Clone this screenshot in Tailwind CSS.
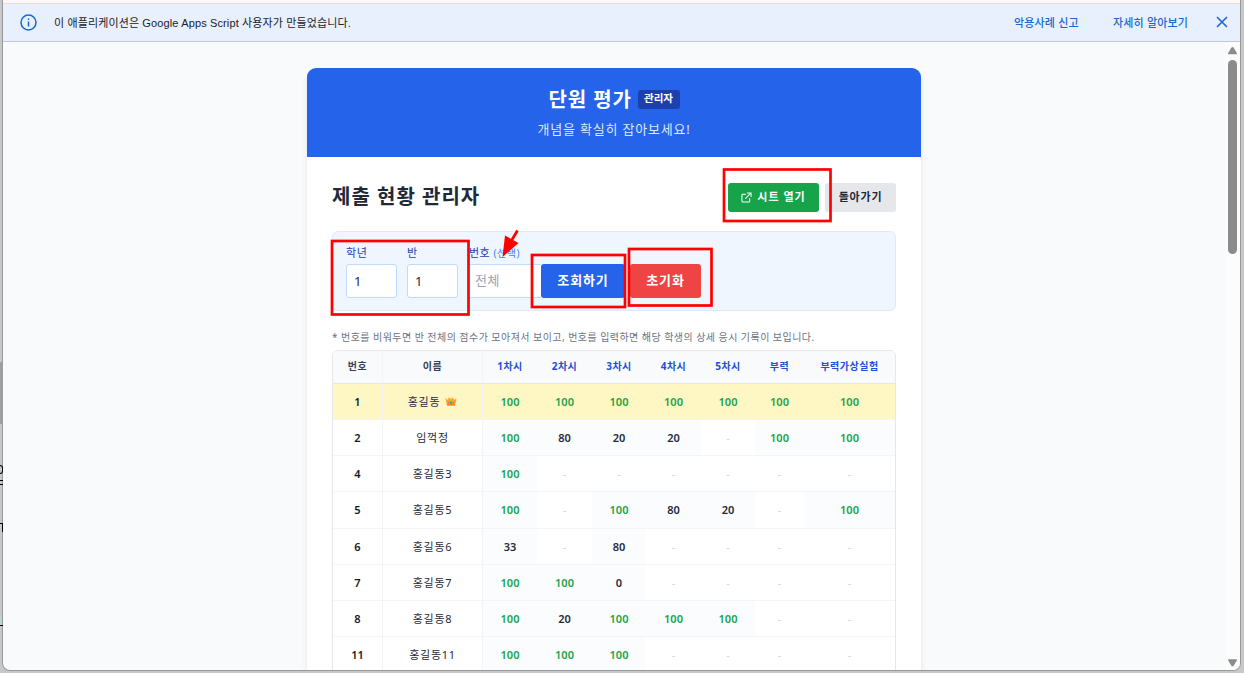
<!DOCTYPE html>
<html lang="ko">
<head>
<meta charset="utf-8">
<title>단원 평가</title>
<script src="https://cdn.jsdelivr.net/npm/@tailwindcss/browser@4"></script>
</head>
<body class="relative h-[673px] w-[1244px] overflow-hidden bg-[#c8c8c8] pr-[3px] pl-[2px] font-['Noto_Sans','Noto_Sans_CJK_KR',sans-serif]">
<div class="absolute top-[362px] left-0 h-[62px] w-[3px] bg-[#9f9f9f]"></div>
<div class="absolute top-[465px] left-0 h-[9px] w-[3px] rounded-r-full border-y border-r border-black"></div>
<div class="absolute top-[480px] left-0 h-[5px] w-[3px] border-y border-black"></div>
<div class="absolute top-[523px] left-0 h-[9px] w-[3px] border-t border-r border-black"></div>
<div class="absolute top-[625px] left-0 h-px w-[3px] bg-black"></div>
<div class="absolute top-[616px] left-0 h-[9px] w-[2px] bg-[#b9d3d0]"></div>

<div class="flex h-[671px] flex-col overflow-hidden rounded-b-[8px] border-x border-b border-[#999] bg-[#f9fafb]">
  <div class="h-[4px] shrink-0 border-b border-[#f3d9d3] bg-[#fdf8f6]"></div>
  <header class="flex h-[38px] shrink-0 items-center border-b border-[#c4c7cc] bg-[#e8f0fe] pr-[12px] pl-[17px] font-['Liberation_Sans','Noto_Sans_CJK_KR',sans-serif] text-[11px] whitespace-nowrap">
    <svg class="h-[17px] w-[17px] shrink-0" viewBox="0 0 17 17" fill="none" stroke="#1967d2" stroke-width="1.5"><circle cx="8.5" cy="8.5" r="7.5"/><path d="M8.5 7.5v5M8.5 4.4v1.6"/></svg>
    <span class="mt-[2px] ml-[17px] inline-block w-[297px] tracking-[0.13px] text-[#202124]">이 애플리케이션은 Google Apps Script 사용자가 만들었습니다.</span>
    <span class="mt-[2px] ml-auto w-[65px] tracking-[0.15px] font-medium text-[#1967d2]">악용사례 신고</span>
    <span class="mt-[2px] ml-[34px] w-[75px] tracking-[0.15px] font-medium text-[#1967d2]">자세히 알아보기</span>
    <svg class="mt-[-2px] ml-[28px] h-[12px] w-[12px] shrink-0" viewBox="0 0 12 12" fill="none" stroke="#1967d2" stroke-width="1.6"><path d="M1 1l10 10M11 1L1 11"/></svg>
  </header>

  <div class="flex min-h-0 flex-1">
    <main class="flex h-full flex-1 justify-center overflow-hidden pt-[26px] pr-[1px]">
      <div class="h-[660px] w-[614px] shrink-0 overflow-hidden rounded-t-[9px] bg-white shadow-md">
        <div class="flex h-[89px] flex-col items-center bg-[#2563eb] pt-[17px] text-white">
          <div class="flex h-[28px] items-center gap-[6px]">
            <h1 class="mt-[2px] w-[83px] text-[20px] leading-[28px] font-bold tracking-[0.9px] whitespace-nowrap">단원 평가</h1>
            <span class="flex h-[19px] w-[42px] items-center justify-center rounded-[3px] bg-[#1e40af] text-[10.5px] font-bold whitespace-nowrap">관리자</span>
          </div>
          <p class="mt-[6px] text-[13px] leading-[20px] tracking-[0.8px] whitespace-nowrap text-[#dbeafe]">개념을 확실히 잡아보세요!</p>
        </div>

        <div class="px-[25px] pt-[26px]">
          <div class="flex h-[29px] items-center">
            <h2 class="mt-[-2px] mr-auto text-[20px] font-bold tracking-[1px] whitespace-nowrap text-[#1f2937]">제출 현황 관리자</h2>
            <button class="flex h-[29px] w-[91px] items-center justify-center gap-[5px] rounded-[3px] bg-[#16a34a] text-[11px] font-bold tracking-[1px] whitespace-nowrap text-white">
              <svg class="h-[11px] w-[11px]" viewBox="0 0 24 24" fill="none" stroke="currentColor" stroke-width="2.2" stroke-linecap="round" stroke-linejoin="round"><path d="M10 5H4a2 2 0 0 0-2 2v13a2 2 0 0 0 2 2h13a2 2 0 0 0 2-2v-6M14 2h8v8M22 2L10 14"/></svg>
              시트 열기
            </button>
            <button class="ml-[6px] h-[29px] w-[71px] rounded-[3px] bg-[#e5e7eb] text-[11px] font-bold tracking-[0.8px] whitespace-nowrap text-[#1f2937]">돌아가기</button>
          </div>

          <div class="mt-[19px] flex h-[80px] rounded-[6px] border border-[#dbeafe] bg-[#eff6ff] pt-[13px] pl-[13px] whitespace-nowrap">
            <div class="w-[61px]">
              <div class="h-[19px] text-[11px] leading-[16px] tracking-[0.7px] text-[#1e40af]">학년</div>
              <div class="flex h-[34px] w-[51px] items-center rounded-[3px] border border-[#bfdbfe] bg-white pt-[2px] pl-[7px] text-[13px] text-[#1f2937]">1</div>
            </div>
            <div class="w-[61px]">
              <div class="h-[19px] text-[11px] leading-[16px] text-[#1e40af]">반</div>
              <div class="flex h-[34px] w-[51px] items-center rounded-[3px] border border-[#bfdbfe] bg-white pt-[2px] pl-[7px] text-[13px] text-[#1f2937]">1</div>
            </div>
            <div class="w-[73px]">
              <div class="h-[19px] pl-[1px] text-[11px] leading-[16px] tracking-[0.5px] text-[#1e40af]">번호 <span class="text-[10px] text-[#3b82f6]">(선택)</span></div>
              <div class="flex h-[34px] w-[73px] items-center rounded-l-[3px] border border-r-0 border-[#bfdbfe] bg-white pl-[6px] text-[13px] tracking-[0.5px] text-[#9ca3af]">전체</div>
            </div>
            <button class="mt-[19px] h-[34px] w-[84px] rounded-[3px] bg-[#2563eb] text-[13px] font-bold tracking-[0.9px] text-white">조회하기</button>
            <button class="mt-[19px] ml-[5px] h-[34px] w-[71px] rounded-[3px] bg-[#ef4444] text-[13px] font-bold tracking-[0.9px] text-white">초기화</button>
          </div>

          <p class="mt-[17px] h-[22px] text-[10px] leading-[18px] tracking-[0.45px] whitespace-nowrap text-[#6b7280]">* 번호를 비워두면 반 전체의 점수가 모아져서 보이고, 번호를 입력하면 해당 학생의 상세 응시 기록이 보입니다.</p>

          <div class="h-[400px] w-[564px] overflow-hidden rounded-t-[6px] border border-[#e5e7eb]">
            <div class="grid h-[33px] grid-cols-[50px_100px_54px_55px_54px_55px_54px_49px_91px] border-b border-[#e5e7eb] bg-[#f9fafb] text-center text-[10px] leading-[31px] font-bold tracking-[0.5px] whitespace-nowrap text-[#1d4ed8]">
              <div class="border-r border-[#f3f4f6] text-[#374151]">번호</div><div class="border-r border-[#f3f4f6] text-[#374151]">이름</div><div>1차시</div><div>2차시</div><div>3차시</div><div>4차시</div><div>5차시</div><div>부력</div><div>부력가상실험</div>
            </div>
            <div id="rows" class="mt-[-0.2px]"></div>
          </div>
        </div>
      </div>
    </main>
    <div class="flex w-[14px] shrink-0 flex-col items-center bg-[#fcfcfc] pt-[5px] pr-[1px] pb-[3px]">
      <svg class="h-[8px] w-[9px] shrink-0" viewBox="0 0 9 8" fill="#8b8b8b"><path d="M4.5 0Q5.2 0 5.6.6L8.8 6Q9.3 7.2 8.2 7.2H.8Q-.3 7.2.2 6L3.4.6Q3.8 0 4.5 0z"/></svg>
      <div class="mt-[5px] h-[194px] w-[9px] shrink-0 rounded-full bg-[#8b8b8b]"></div>
      <svg class="mt-auto h-[8px] w-[9px] shrink-0" viewBox="0 0 9 8" fill="#8b8b8b"><path d="M4.5 7.4Q5.2 7.4 5.6 6.8L8.8 1.4Q9.3.2 8.2.2H.8Q-.3.2.2 1.4L3.4 6.8Q3.8 7.4 4.5 7.4z"/></svg>
    </div>
  </div>
</div>

<svg class="absolute top-0 left-0 h-[673px] w-[1244px]" viewBox="0 0 1244 673" fill="none" stroke="#ff0000" stroke-width="2.7">
  <rect x="724" y="169.500" width="106.500" height="51.500"/>
  <rect x="332" y="241" width="136.500" height="73.500"/>
  <rect x="532" y="255" width="93" height="52"/>
  <rect x="629" y="249" width="82.500" height="56.500"/>
  <path d="M517.500 230.500L510 243"/>
  <path d="M505 235.500L518.500 243L502.500 257Z" fill="#ff0000" stroke="none"/>
</svg>

<script>
const data = [
  [1, '홍길동', 100, 100, 100, 100, 100, 100, 100],
  [2, '임꺽정', 100, 80, 20, 20, '-', 100, 100],
  [4, '홍길동3', 100, '-', '-', '-', '-', '-', '-'],
  [5, '홍길동5', 100, '-', 100, 80, 20, '-', 100],
  [6, '홍길동6', 33, '-', 80, '-', '-', '-', '-'],
  [7, '홍길동7', 100, 100, 0, '-', '-', '-', '-'],
  [8, '홍길동8', 100, 20, 100, 100, 100, '-', '-'],
  [11, '홍길동11', 100, 100, 100, '-', '-', '-', '-'],
];
const crown = '<svg class="ml-[5px] h-[10px] w-[12px]" viewBox="0 0 12 10"><path d="M.5 2l2.300 2L4 1l1.300 2.500L6 .4l.7 3.100L8 1l1.200 3 2.300-2-1.300 7.500H1.800z" fill="#f9a825"/><path d="M2 8h8v1.500H2z" fill="#f58b1e"/><circle cx="6" cy="6.800" r="1.200" fill="#29a3c7"/><circle cx="3.500" cy="6.800" r=".7" fill="#e8583d"/><circle cx="8.500" cy="6.800" r=".7" fill="#e8583d"/></svg>';
document.getElementById('rows').innerHTML = data.map((r, i) => {
  const top = i === 0;
  const cells = r.slice(2).map(v => {
    const bg = top || v === '-' ? '' : 'bg-[#fbfcfe]';
    const fg = v === '-' ? 'text-[#d1d5db] font-normal' : v === 100 ? 'text-[#16a34a] font-semibold' : 'text-[#1f2937] font-semibold';
    return `<div class="${bg} ${fg}">${v}</div>`;
  }).join('');
  return `<div class="grid h-[36.2px] grid-cols-[50px_100px_54px_55px_54px_55px_54px_49px_91px] border-b border-[#f3f4f6] text-center text-[11px] leading-[35.2px] whitespace-nowrap ${top ? 'bg-[#fef7c3]' : 'bg-white'}"><div class="border-r border-[#f3f4f6] font-semibold text-[#111827]">${r[0]}</div><div class="flex items-center justify-center border-r border-[#f3f4f6] tracking-[0.7px] text-[#1f2937]">${r[1]}${top ? crown : ''}</div>${cells}</div>`;
}).join('');
</script>
</body>
</html>
